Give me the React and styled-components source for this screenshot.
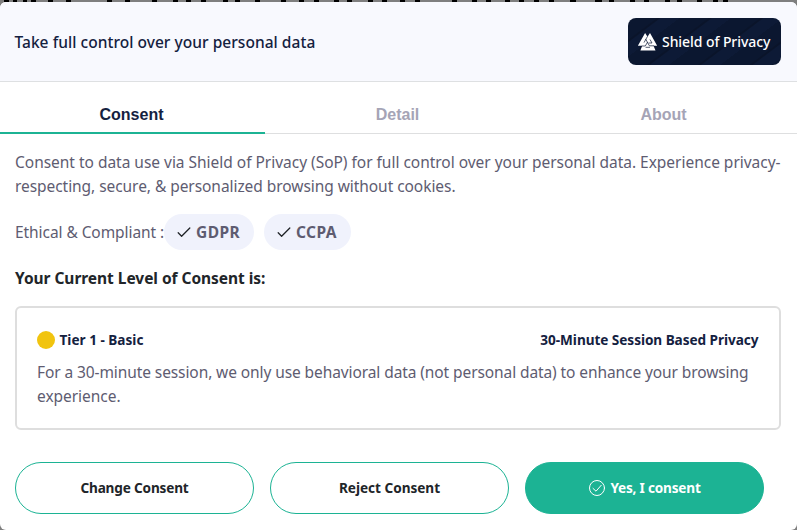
import React from 'react';
import styled, { createGlobalStyle, css } from 'styled-components';

const GlobalStyle = createGlobalStyle`
  *, *::before, *::after { box-sizing: border-box; }
  body { margin: 0; background: #7f7f7f; overflow: hidden; }
`;

const sans = css`font-family: 'Noto Sans', 'Open Sans', sans-serif;`;
const button = css`
  appearance: none;
  border: 0;
  margin: 0;
  padding: 0;
  cursor: pointer;
`;

const Page = styled.div`
  ${sans}
  width: 797px;
  height: 530px;
  display: flex;
  flex-direction: column;
  background: #7f7f7f;
`;

const Behind = styled.svg`
  display: block;
  width: 797px;
  height: 2px;
  flex: none;
`;

const Dialog = styled.section`
  flex: 1;
  display: flex;
  flex-direction: column;
  background: #fff;
  border-radius: 6px;
  overflow: hidden;
`;

const Header = styled.header`
  height: 80px;
  display: flex;
  align-items: center;
  justify-content: space-between;
  padding: 0 16px 0 14.5px;
  background: #f8f9fe;
  border-bottom: 1px solid #dee0e2;
`;

const Title = styled.h1`
  margin: 0;
  font-size: 15.5px;
  line-height: 24px;
  font-weight: 500;
  letter-spacing: 0.04px;
  color: #14213f;
`;

const Brand = styled.div`
  width: 153px;
  height: 47px;
  display: flex;
  align-items: center;
  gap: 5px;
  padding-left: 10px;
  border-radius: 8px;
  color: #fff;
  font-size: 14px;
  font-weight: 500;
  letter-spacing: -0.07px;
  white-space: nowrap;
  background: repeating-linear-gradient(143deg, #0b1730 0 17px, #0a142a 18px 19px, #0d1a36 20px 31px);
`;

const Tabs = styled.nav`
  display: grid;
  grid-template-columns: 265px 265px 1fr;
  height: 52px;
  flex: none;
`;

const Tab = styled.button`
  ${button}
  display: flex;
  align-items: flex-start;
  justify-content: center;
  padding: 21px ${p => (p.$active ? '2px' : '0')} 0 0;
  background: none;
  font: 700 16px/24px 'Liberation Sans', Arial, sans-serif;
  color: ${p => (p.$active ? '#14213f' : '#a5a4b6')};
  border-bottom: ${p => (p.$active ? '2px solid #1cb394' : '1px solid #dedfe0')};
`;

const Body = styled.main`
  padding: 16px 16px 0 15px;
  display: flex;
  flex-direction: column;
`;

const Text = styled.p`
  margin: 0;
  font-size: 15.5px;
  line-height: 24px;
  color: #5e5c71;
`;

const Line = styled.span`
  display: block;
  white-space: nowrap;
  letter-spacing: ${p => p.$track}px;
`;

const Compliance = styled.div`
  display: flex;
  align-items: center;
  height: 36px;
  margin-top: 16px;
`;

const Label = styled(Text)`
  width: 149px;
  white-space: nowrap;
  letter-spacing: -0.07px;
`;

const Badge = styled.span`
  width: ${p => p.$width}px;
  height: 36px;
  display: flex;
  align-items: center;
  padding-left: 12px;
  gap: 4px;
  margin-right: 10px;
  border-radius: 18px;
  background: #f0f2fc;
  color: #5e5c71;
  font-size: 15.5px;
  font-weight: 700;
  letter-spacing: 0.42px;
`;

const Heading = styled.h2`
  margin: 16px 0;
  font-size: 15.5px;
  line-height: 24px;
  font-weight: 700;
  letter-spacing: -0.04px;
  color: #212529;
`;

const Card = styled.article`
  height: 124px;
  padding: 20px;
  border: 2px solid #dedede;
  border-radius: 6px;
`;

const CardTop = styled.div`
  display: flex;
  align-items: center;
  height: 24px;
  margin-bottom: 8px;
  font-size: 13.6px;
  line-height: 24px;
  font-weight: 700;
  color: #14213f;
`;

const Dot = styled.i`
  width: 18px;
  height: 18px;
  margin-right: 4.5px;
  border-radius: 50%;
  background: #f1c40f;
`;

const Session = styled.span`
  margin-left: auto;
  padding-right: 0.5px;
  letter-spacing: -0.05px;
`;

const Actions = styled.footer`
  display: flex;
  gap: 16px;
  margin-top: 32px;
`;

const Action = styled.button`
  ${button}
  ${sans}
  width: 239px;
  height: 52px;
  display: flex;
  align-items: center;
  justify-content: center;
  gap: 5px;
  border: 1px solid #1cb394;
  border-radius: 26px;
  background: ${p => (p.$primary ? '#1cb394' : '#fff')};
  color: ${p => (p.$primary ? '#fff' : '#212529')};
  padding-left: ${p => (p.$primary ? '1px' : '0')};
  font-size: 13.6px;
  font-weight: 700;
  letter-spacing: ${p => p.$track}px;
`;

const ActionLabel = styled.span`
  padding-bottom: 2px;
`;

const headline = [
  [4, 5], [13, 4], [23, 4], [31, 5], [48, 5], [66, 5], [107, 5], [125, 5], [152, 5], [173, 5],
  [186, 5], [201, 5], [223, 5], [235, 5], [255, 5], [281, 5], [299, 5], [314, 5], [334, 5],
  [347, 5], [368, 5], [382, 5], [400, 5], [415, 5], [452, 5], [472, 5], [486, 5], [505, 5],
  [519, 5], [534, 5], [549, 5], [570, 6], [595, 7], [609, 5], [630, 5], [644, 5], [665, 5],
  [677, 5], [697, 5], [713, 5], [723, 5],
];

function Check() {
  return (
    <svg width="16" height="16" viewBox="0 0 16 16" fill="none" stroke="#212529" strokeWidth="1.3" strokeLinecap="round" strokeLinejoin="round">
      <path d="M2.2 8.8 5.6 12.2 13.8 4" />
    </svg>
  );
}

function CheckCircle() {
  return (
    <svg width="16" height="16" viewBox="0 0 16 16" fill="none" stroke="#fff" strokeLinecap="round" strokeLinejoin="round">
      <circle cx="8" cy="8" r="7.5" />
      <path d="M4 8.4 7 11.2 12.2 5.3" />
    </svg>
  );
}

function Valknut() {
  return (
    <svg width="19" height="18" viewBox="0 0 19 18">
      <path fill="#fff" d="M7.1 0 9.5 3.8 12 0 19.2 12.8H15.5L17.5 17.6H2.4L4.2 12.8H-.2Z" />
      <path fill="none" stroke="#0c1833" strokeWidth=".7" d="M9.5 3.4 6 9.6M7.6 6 11.4 12.8H16M12 6.5 14 10H10.6M3.8 13H7.3L9.6 9M7.6 14.3H12" />
    </svg>
  );
}

export default function App() {
  return (
    <Page>
      <GlobalStyle />
      <Behind viewBox="0 0 797 2" aria-hidden="true">
        {headline.map(([x, w]) => <rect key={x} x={x} y="0" width={w} height="2" />)}
      </Behind>
      <Dialog role="dialog">
        <Header>
          <Title>Take full control over your personal data</Title>
          <Brand><Valknut />Shield of Privacy</Brand>
        </Header>
        <Tabs>
          <Tab $active>Consent</Tab>
          <Tab>Detail</Tab>
          <Tab>About</Tab>
        </Tabs>
        <Body>
          <Text>
            <Line $track={-0.021}>Consent to data use via Shield of Privacy (SoP) for full control over your personal data. Experience privacy-</Line>
            <Line $track={-0.058}>respecting, secure, &amp; personalized browsing without cookies.</Line>
          </Text>
          <Compliance>
            <Label>Ethical &amp; Compliant :</Label>
            <Badge $width={90}><Check />GDPR</Badge>
            <Badge $width={87}><Check />CCPA</Badge>
          </Compliance>
          <Heading>Your Current Level of Consent is:</Heading>
          <Card>
            <CardTop>
              <Dot />
              <span>Tier 1 - Basic</span>
              <Session>30-Minute Session Based Privacy</Session>
            </CardTop>
            <Text>
              <Line $track={-0.094}>For a 30-minute session, we only use behavioral data (not personal data) to enhance your browsing</Line>
              <Line $track={-0.04}>experience.</Line>
            </Text>
          </Card>
          <Actions>
            <Action $track={-0.17}><ActionLabel>Change Consent</ActionLabel></Action>
            <Action $track={-0.02}><ActionLabel>Reject Consent</ActionLabel></Action>
            <Action $primary $track={-0.2}><CheckCircle /><ActionLabel>Yes, I consent</ActionLabel></Action>
          </Actions>
        </Body>
      </Dialog>
    </Page>
  );
}
